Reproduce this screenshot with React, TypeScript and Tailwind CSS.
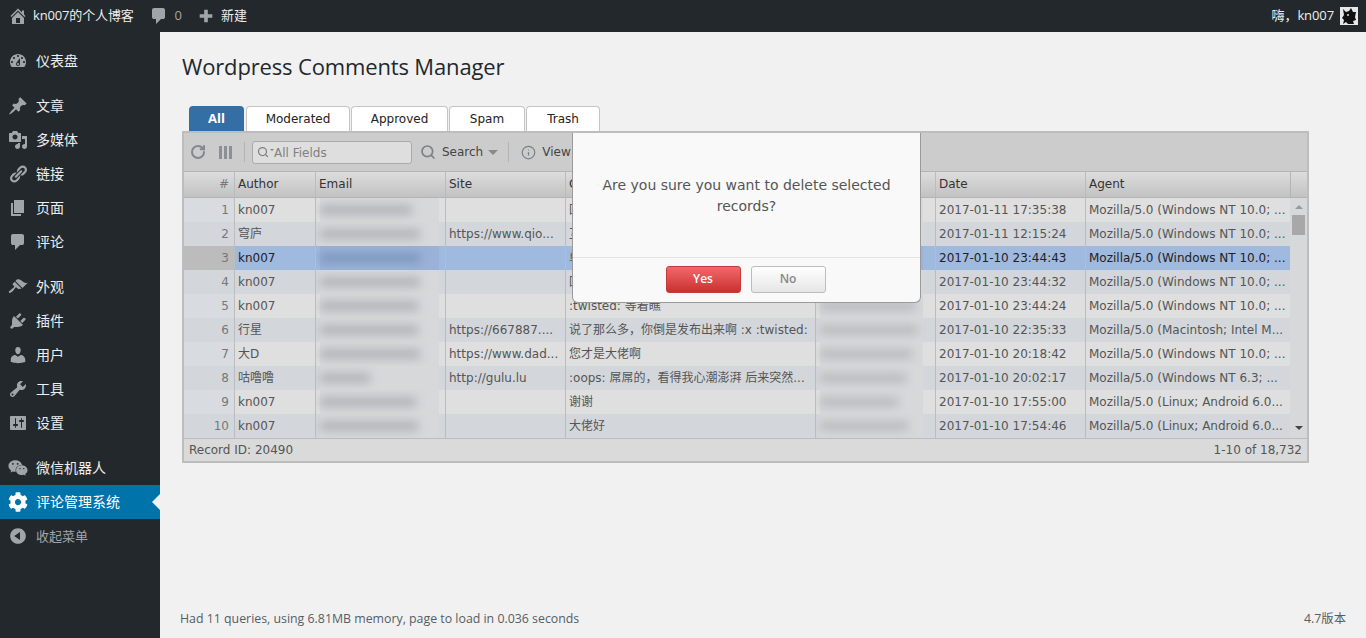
import type React from 'react';
import { FaCog, FaWeixin } from 'react-icons/fa';
import { RotateCw, Search, Info } from 'lucide-react';

const P: Record<string, string> = {
  home: 'M16 8.5l1.53 1.53-1.06 1.06L10 4.62l-6.47 6.47-1.06-1.06L10 2.5l4 4v-2h2v4zm-6-2.46l6 5.99V18H4v-5.97zM12 17v-5H8v5h4z',
  comment: 'M5 2h9q.82 0 1.41.59T16 4v7q0 .82-.59 1.41T14 13h-2l-5 5v-5H5q-.82 0-1.41-.59T3 11V4q0-.82.59-1.41T5 2z',
  plus: 'M17 8v4h-5v5H8v-5H3V8h5V3h4v5h5z',
  dashboard: 'M3.76 16h12.48c1.1-1.37 1.76-3.11 1.76-5 0-4.42-3.58-8-8-8s-8 3.58-8 8c0 1.89.66 3.63 1.76 5zM10 4c.55 0 1 .45 1 1s-.45 1-1 1-1-.45-1-1 .45-1 1-1zM6 6c.55 0 1 .45 1 1s-.45 1-1 1-1-.45-1-1 .45-1 1-1zm8 0c.55 0 1 .45 1 1s-.45 1-1 1-1-.45-1-1 .45-1 1-1zm-5.37 5.55L12 7v6c0 1.1-.9 2-2 2s-2-.9-2-2c0-.57.24-1.08.63-1.45zM4 10c.55 0 1 .45 1 1s-.45 1-1 1-1-.45-1-1 .45-1 1-1zm12 0c.55 0 1 .45 1 1s-.45 1-1 1-1-.45-1-1 .45-1 1-1zm-5 3c0-.55-.45-1-1-1s-1 .45-1 1 .45 1 1 1 1-.45 1-1z',
  post: 'M10.44 3.02l1.82-1.82 6.36 6.35-1.83 1.82c-1.05-.68-2.48-.57-3.41.36l-.75.75c-.92.93-1.04 2.35-.35 3.41l-1.83 1.82-2.41-2.41-2.8 2.79c-.42.42-3.38 2.71-3.8 2.29s1.86-3.39 2.28-3.81l2.79-2.79L4.1 9.36l1.83-1.82c1.05.69 2.48.57 3.4-.36l.75-.75c.93-.92 1.05-2.35.36-3.41z',
  media: 'M13 11V4c0-.55-.45-1-1-1h-1.67L9 1H5L3.67 3H2c-.55 0-1 .45-1 1v7c0 .55.45 1 1 1h10c.55 0 1-.45 1-1zM7 4.5c1.38 0 2.5 1.12 2.5 2.5S8.38 9.5 7 9.5 4.5 8.38 4.5 7 5.62 4.5 7 4.5zM14 6h5v10.5c0 1.38-1.12 2.5-2.5 2.5S14 17.88 14 16.5s1.12-2.5 2.5-2.5c.17 0 .34.02.5.05V9h-3V6zm-4 8.05V13h2v3.5c0 1.38-1.12 2.5-2.5 2.5S7 17.88 7 16.5 8.12 14 9.5 14c.17 0 .34.02.5.05z',
  links: 'M17.74 2.76c1.68 1.69 1.68 4.41 0 6.1l-1.53 1.52c-1.12 1.12-2.7 1.47-4.14 1.09l2.62-2.61.76-.77.76-.76c.84-.84.84-2.2 0-3.04-.84-.85-2.2-.85-3.04 0l-.77.76-3.38 3.38c-.37-1.44-.02-3.02 1.1-4.14l1.52-1.53c1.69-1.68 4.42-1.68 6.1 0zM8.59 13.43l5.34-5.34c.42-.42.42-1.1 0-1.52-.44-.43-1.13-.39-1.53 0l-5.33 5.34c-.42.42-.42 1.1 0 1.52.44.43 1.13.39 1.52 0zm-.76 2.29l4.14-4.15c.38 1.44.03 3.02-1.09 4.14l-1.52 1.53c-1.69 1.68-4.41 1.68-6.1 0-1.68-1.68-1.68-4.42 0-6.1l1.53-1.52c1.12-1.12 2.7-1.47 4.14-1.1l-4.14 4.15c-.85.84-.85 2.2 0 3.05.84.84 2.2.84 3.04 0z',
  page: 'M6 15V2h10v13H6zm-1 1h8v2H3V5h2v11z',
  appearance: 'M14.48 11.06L7.41 3.99l1.5-1.5c.5-.56 2.3-.47 3.51.32 1.21.8 1.43 1.28 2.91 2.1 1.18.64 2.45 1.26 4.45.85zm-.71.71L6.7 4.7 4.93 6.47c-.39.39-.39 1.02 0 1.41l1.06 1.06c.39.39.39 1.03 0 1.42-.6.6-1.43 1.11-2.21 1.69-.35.26-.7.53-1.01.84C1.43 13.23.4 14.98 1.1 15.68c.7.7 2.45-.33 3.79-1.67.31-.31.58-.66.85-1.02.57-.78 1.08-1.61 1.69-2.21.39-.39 1.02-.39 1.41 0l1.06 1.06c.39.39 1.02.39 1.41 0z',
  plugins: 'M13.11 4.36L9.87 7.6 8 5.73l3.24-3.24c.35-.34 1.05-.2 1.56.32.52.51.66 1.21.31 1.55zm-8 1.77l.91-1.12 9.01 9.01-1.19.84c-.71.71-2.63 1.16-3.82 1.16H6.14L4.9 17.26c-.59.59-1.54.59-2.12 0-.59-.58-.59-1.53 0-2.12l1.24-1.24v-3.88c0-1.13.4-3.19 1.09-3.89zm7.26 3.97l3.24-3.24c.34-.35 1.04-.21 1.55.31.52.51.66 1.21.31 1.55l-3.24 3.25z',
  users: 'M10 9.25c-2.27 0-2.73-3.44-2.73-3.44C7 4.02 7.82 2 9.97 2c2.16 0 2.98 2.02 2.71 3.81 0 0-.41 3.44-2.68 3.44zm0 2.57L12.72 10c2.39 0 4.52 2.33 4.52 4.53v2.49s-3.65 1.13-7.24 1.13c-3.65 0-7.24-1.13-7.24-1.13v-2.49c0-2.25 1.94-4.48 4.47-4.48z',
  tools: 'M16.68 9.77c-1.34 1.34-3.3 1.67-4.95.99l-5.41 6.52c-.99.99-2.59.99-3.58 0s-.99-2.59 0-3.57l6.52-5.42c-.68-1.65-.35-3.61.99-4.95 1.28-1.28 3.12-1.62 4.72-1.06l-2.89 2.89 2.82 2.82 2.86-2.87c.53 1.58.18 3.39-1.08 4.65zM3.81 16.21c.4.39 1.04.39 1.43 0 .4-.4.4-1.04 0-1.43-.39-.4-1.03-.4-1.43 0-.39.39-.39 1.03 0 1.43z',
  settings: 'M18 16V4c0-.55-.45-1-1-1H3c-.55 0-1 .45-1 1v12c0 .55.45 1 1 1h14c.55 0 1-.45 1-1zM8 11h1c.55 0 1 .45 1 1s-.45 1-1 1H8v1.5c0 .28-.22.5-.5.5s-.5-.22-.5-.5V13H6c-.55 0-1-.45-1-1s.45-1 1-1h1V5.5c0-.28.22-.5.5-.5s.5.22.5.5V11zm5-2h-1c-.55 0-1-.45-1-1s.45-1 1-1h1V5.5c0-.28.22-.5.5-.5s.5.22.5.5V7h1c.55 0 1 .45 1 1s-.45 1-1 1h-1v5.5c0 .28-.22.5-.5.5s-.5-.22-.5-.5V9z',
  collapse: 'M10 2.16c4.33 0 7.84 3.51 7.84 7.84s-3.51 7.84-7.84 7.84S2.16 14.33 2.16 10 5.71 2.16 10 2.16zm2 11.72V6.12L6.18 9.97z',
};

function Dash({ name, className }: { name: string; className?: string }) {
  return (
    <svg viewBox="0 0 20 20" fill="currentColor" className={className}>
      <path d={P[name]} />
    </svg>
  );
}

const menu: { icon: string; label: string; gap?: boolean }[] = [
  { icon: 'dashboard', label: '仪表盘' },
  { icon: 'post', label: '文章', gap: true },
  { icon: 'media', label: '多媒体' },
  { icon: 'links', label: '链接' },
  { icon: 'page', label: '页面' },
  { icon: 'comment', label: '评论' },
  { icon: 'appearance', label: '外观', gap: true },
  { icon: 'plugins', label: '插件' },
  { icon: 'users', label: '用户' },
  { icon: 'tools', label: '工具' },
  { icon: 'settings', label: '设置' },
  { icon: 'wechat', label: '微信机器人', gap: true },
];

const agentWin = 'Mozilla/5.0 (Windows NT 10.0; ...';
const rows = [
  { n: 1, author: 'kn007', site: '', text: '回', ip: 'w-[84px]', mail: 'w-[92px]', date: '2017-01-11 17:35:38', agent: agentWin },
  { n: 2, author: '穹庐', site: 'https://www.qio...', text: '互', ip: 'w-[90px]', mail: 'w-[100px]', date: '2017-01-11 12:15:24', agent: agentWin },
  { n: 3, author: 'kn007', site: '', text: '单', ip: 'w-[84px]', mail: 'w-[100px]', date: '2017-01-10 23:44:43', agent: agentWin },
  { n: 4, author: 'kn007', site: '', text: '回', ip: 'w-[84px]', mail: 'w-[100px]', date: '2017-01-10 23:44:32', agent: agentWin },
  { n: 5, author: 'kn007', site: '', text: ':twisted: 等着瞧', ip: 'w-[96px]', mail: 'w-[98px]', date: '2017-01-10 23:44:24', agent: agentWin },
  { n: 6, author: '行星', site: 'https://667887....', text: '说了那么多，你倒是发布出来啊 :x :twisted:', ip: 'w-[98px]', mail: 'w-[98px]', date: '2017-01-10 22:35:33', agent: 'Mozilla/5.0 (Macintosh; Intel M...' },
  { n: 7, author: '大D', site: 'https://www.dad...', text: '您才是大佬啊', ip: 'w-[92px]', mail: 'w-[100px]', date: '2017-01-10 20:18:42', agent: agentWin },
  { n: 8, author: '咕噜噜', site: 'http://gulu.lu', text: ':oops: 屌屌的，看得我心潮澎湃 后来突然...', ip: 'w-[86px]', mail: 'w-[50px]', date: '2017-01-10 20:02:17', agent: 'Mozilla/5.0 (Windows NT 6.3; ...' },
  { n: 9, author: 'kn007', site: '', text: '谢谢', ip: 'w-[78px]', mail: 'w-[96px]', date: '2017-01-10 17:55:00', agent: 'Mozilla/5.0 (Linux; Android 6.0...' },
  { n: 10, author: 'kn007', site: '', text: '大佬好', ip: 'w-[88px]', mail: 'w-[98px]', date: '2017-01-10 17:54:46', agent: 'Mozilla/5.0 (Linux; Android 6.0...' },
];

const tabs = [
  { label: 'Moderated', w: 'w-[104px]' },
  { label: 'Approved', w: 'w-[97px]' },
  { label: 'Spam', w: 'w-[76px]' },
  { label: 'Trash', w: 'w-[74px]' },
];

const headers = [
  { label: 'Author', w: 'w-[81px]' },
  { label: 'Email', w: 'w-[130px]' },
  { label: 'Site', w: 'w-[120px]' },
  { label: 'C', w: 'w-[250px]' },
  { label: '', w: 'w-[120px]' },
  { label: 'Date', w: 'w-[150px]' },
  { label: 'Agent', w: 'w-[205px]' },
];

const Cell = ({ w, children }: { w: string; children?: React.ReactNode }) => (
  <div className={`${w} h-full shrink-0 border-l border-[#b9bcc0] px-[3px] leading-[24px] whitespace-nowrap overflow-hidden`}>
    {children}
  </div>
);

export default function App() {
  return (
    <div className="h-[638px] w-[1366px] overflow-hidden bg-[#f1f1f1] font-['Open_Sans','Noto_Sans_CJK_SC',sans-serif]">
      {/* Admin bar */}
      <div className="flex h-8 items-center bg-[#23282d] pl-2 pr-2 text-[13px] text-[#eeeeee]">
        <Dash name="home" className="h-[20px] w-[20px] text-[#a0a5aa]" />
        <span className="ml-[5px] tracking-[-0.15px]">kn007的个人博客</span>
        <Dash name="comment" className="ml-[15px] h-[20px] w-[20px] text-[#a0a5aa]" />
        <span className="ml-[6px] text-[#a0a5aa]">0</span>
        <Dash name="plus" className="ml-[15px] h-[18px] w-[18px] text-[#a0a5aa]" />
        <span className="ml-[6px]">新建</span>
        <span className="ml-auto tracking-[-0.1px]">嗨，kn007</span>
        <svg viewBox="0 0 18 18" className="ml-[6px] h-[18px] w-[18px]">
          <rect width="18" height="18" fill="#e8e8e8" />
          <path d="M3 2l3 3 3-1 2-3 2 4 3 0-1 5 1 3-3 1 1 3H8l-2-2-3 2 1-4-2-2 2-3z" fill="#111" />
          <circle cx="8" cy="8" r="1" fill="#ddd" />
        </svg>
      </div>

      <div className="flex h-[606px]">
        {/* Sidebar */}
        <aside className="flex w-40 shrink-0 flex-col bg-[#23282d] pt-3 text-sm text-[#eeeeee]">
          {menu.map((m) => (
            <div key={m.label} className={`flex h-[34px] items-center pl-2 ${m.gap ? 'mt-[11px]' : ''}`}>
              {m.icon === 'wechat' ? (
                <FaWeixin className="h-5 w-5 text-[#a0a5aa]" />
              ) : (
                <Dash name={m.icon} className="h-5 w-5 text-[#a0a5aa]" />
              )}
              <span className="ml-2">{m.label}</span>
            </div>
          ))}
          <div className="relative flex h-[34px] items-center bg-[#0073aa] pl-2 text-white">
            <FaCog className="h-5 w-5" />
            <span className="ml-2">评论管理系统</span>
            <div className="absolute right-0 top-[9px] h-0 w-0 border-y-8 border-r-8 border-y-transparent border-r-[#f1f1f1]" />
          </div>
          <div className="flex h-[34px] items-center pl-2 text-[13px] text-[#a0a5aa]">
            <Dash name="collapse" className="h-5 w-5" />
            <span className="ml-2">收起菜单</span>
          </div>
        </aside>

        {/* Main */}
        <main className="flex min-w-0 flex-1 flex-col px-5">
          <h1 className="ml-[2px] mt-[18px] h-8 text-[22px] font-normal leading-8 tracking-[-0.15px] text-[#23282d]">Wordpress Comments Manager</h1>

          <div className="ml-[9px] mt-[24px] flex h-[25px] items-end gap-px text-xs font-['DejaVu_Sans','Noto_Sans_CJK_SC',sans-serif] text-[#222222]">
            <div className="mr-px flex h-[25px] w-[55px] items-center justify-center rounded-t-[4px] bg-[#336fa5] font-['Open_Sans'] text-[13px] font-bold text-white">All</div>
            {tabs.map((t) => (
              <div key={t.label} className={`${t.w} flex h-[25px] items-center justify-center rounded-t-[4px] border border-b-0 border-[#c5c5c5] bg-white`}>
                {t.label}
              </div>
            ))}
          </div>

          {/* Grid panel */}
          <div className="relative ml-[2px] h-[332px] w-[1127px] border-2 border-[#bdbdbd] bg-[#cccccc] font-['DejaVu_Sans','Noto_Sans_CJK_SC',sans-serif] text-xs text-[#555555]">
            {/* Toolbar */}
            <div className="flex h-[38px] items-center pl-[6px] text-[#444444]">
              <RotateCw className="h-4 w-4 text-[#808890]" strokeWidth={3} />
              <div className="ml-[13px] flex h-[13px] gap-[2px]">
                <div className="w-[3px] bg-[#8a9096]" />
                <div className="w-[3px] bg-[#8a9096]" />
                <div className="w-[3px] bg-[#8a9096]" />
              </div>
              <div className="ml-[12px] h-5 w-px bg-[#b4b4b4]" />
              <div className="ml-[7px] flex h-[23px] w-[160px] items-center rounded-[3px] border border-[#aaaaaa] bg-[#dedede] pl-1 text-[#808080]">
                <Search className="h-3 w-3" strokeWidth={2.5} />
                <div className="ml-px mt-[-4px] h-0 w-0 border-x-[2px] border-t-[2px] border-x-transparent border-t-[#808080]" />
                <span className="mt-px">All Fields</span>
              </div>
              <Search className="ml-[8px] h-4 w-4 text-[#7a8288]" strokeWidth={2.5} />
              <span className="ml-[6px]">Search</span>
              <div className="ml-[5px] h-0 w-0 border-x-[5px] border-t-[5px] border-x-transparent border-t-[#8a8a8a]" />
              <div className="ml-[10px] h-5 w-px bg-[#b4b4b4]" />
              <Info className="ml-[12px] h-[15px] w-[15px] text-[#7a8288]" />
              <span className="ml-[6px]">View</span>
            </div>

            {/* Header */}
            <div className="flex h-[27px] items-center border-y border-[#b4b4b4] bg-gradient-to-b from-[#dddddd] to-[#c2c2c2] text-[#333333]">
              <div className="w-[50px] shrink-0 pr-[5px] text-right leading-[25px] text-[#777777]">#</div>
              {headers.map((h) => (
                <Cell key={h.w + h.label} w={h.w}>{h.label}</Cell>
              ))}
              <div className="h-full flex-1 border-l border-[#b4b4b4]" />
            </div>

            {/* Rows */}
            <div className="relative h-[240px]">
              {rows.map((r) => {
                const selected = r.n === 3;
                return (
                  <div
                    key={r.n}
                    className={`flex h-6 w-[1106px] items-center ${selected ? 'bg-[#a0b9df]' : r.n % 2 ? 'bg-[#dfdfdf]' : 'bg-[#d3d7dc]'}`}
                  >
                    <div className={`h-full w-[50px] shrink-0 pr-[5px] text-right leading-[24px] text-[#777777] ${selected ? 'bg-[#bcbcbc]' : r.n % 2 ? 'bg-[#d8dbdf]' : 'bg-[#d3d7dc]'}`}>
                      {r.n}
                    </div>
                    <Cell w="w-[81px]"><span className={selected ? 'text-[#222222]' : ''}>{r.author}</span></Cell>
                    <Cell w="w-[130px]">
                      <div className={`ml-px h-full w-[119px] pt-[7px] ${selected ? 'bg-[#9ab2d8]' : 'bg-[#d6d8da]'}`}>
                        <div className={`${r.mail} h-[10px] ${selected ? 'bg-[#7f97bd]' : 'bg-[#b2b5b8]'} blur-[5px]`} />
                      </div>
                    </Cell>
                    <Cell w="w-[120px]">{r.site}</Cell>
                    <Cell w="w-[250px]">{r.text}</Cell>
                    <Cell w="w-[120px]">
                      <div className={`ml-px h-full w-[103px] pt-[7px] ${selected ? 'bg-[#9ab2d8]' : 'bg-[#d6d8da]'}`}>
                        <div className={`${r.ip} h-[10px] bg-[#babcbf] blur-[5px]`} />
                      </div>
                    </Cell>
                    <Cell w="w-[150px]"><span className={selected ? 'text-[#222222]' : ''}>{r.date}</span></Cell>
                    <Cell w="w-[205px]"><span className={selected ? 'text-[#222222]' : ''}>{r.agent}</span></Cell>
                  </div>
                );
              })}
              {/* Scrollbar */}
              <div className="absolute bottom-0 right-0 top-0 w-[17px] bg-[#d6d8da]">
                <div className="absolute left-1/2 top-[7px] h-0 w-0 -translate-x-1/2 border-x-4 border-b-4 border-x-transparent border-b-[#999999]" />
                <div className="absolute left-[2px] top-[17px] h-[20px] w-[13px] bg-[#a8a8a8]" />
                <div className="absolute bottom-[8px] left-1/2 h-0 w-0 -translate-x-1/2 border-x-4 border-t-4 border-x-transparent border-t-[#444444]" />
              </div>
            </div>

            {/* Footer */}
            <div className="flex h-[23px] items-center justify-between border-t border-[#b9bcc0] bg-[#dadada] px-[5px]">
              <span>Record ID: 20490</span>
              <span>1-10 of 18,732</span>
            </div>

            {/* Confirm dialog */}
            <div className="absolute left-[388px] top-0 flex h-[170px] w-[349px] flex-col rounded-b-[6px] border border-t-0 border-[#9a9a9a] bg-[#f9f9f9]">
              <div className="flex h-[125px] items-start justify-center border-b border-[#e3e3e3] px-[20px] pt-[42px] text-center text-sm leading-[21px] text-[#555555]">
                Are you sure you want to delete selected records?
              </div>
              <div className="flex flex-1 items-center justify-center gap-[10px] pb-[2px] pr-[2px] font-['Open_Sans'] font-semibold">
                <div className="flex h-[27px] w-[75px] items-center justify-center rounded-[3px] border border-[#c43a3a] bg-gradient-to-b from-[#f2686b] to-[#c92f2f] text-white">Yes</div>
                <div className="flex h-[27px] w-[75px] items-center justify-center rounded-[3px] border border-[#bdbdbd] bg-gradient-to-b from-[#ffffff] to-[#e6e6e6] text-[#888888]">No</div>
              </div>
            </div>
          </div>

          <div className="mt-auto flex items-center justify-between pb-[9px] text-[12.35px] text-[#555d66]">
            <span>Had 11 queries, using 6.81MB memory, page to load in 0.036 seconds</span>
            <span>4.7版本</span>
          </div>
        </main>
      </div>
    </div>
  );
}
